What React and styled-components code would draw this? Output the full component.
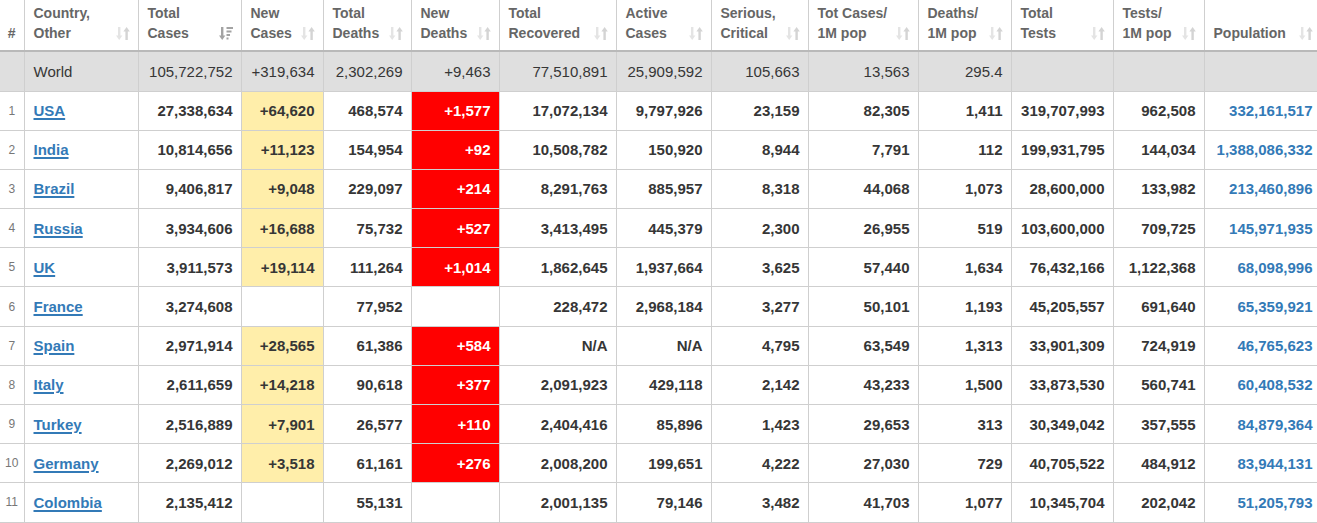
import React from 'react';
import styled, {createGlobalStyle} from 'styled-components';

const GlobalStyle = createGlobalStyle`
	html, body {
		margin: 0;
		padding: 0;
		overflow: hidden;
		background: #fff;
	}
	body {
		font-family: 'Liberation Sans', Arial, Helvetica, sans-serif;
	}
`;

const columns = [
	{key: 'rank', title: '#', width: 24, sort: false},
	{key: 'country', title: ['Country,', 'Other'], width: 114},
	{key: 'totalCases', title: ['Total', 'Cases'], width: 103, active: true},
	{key: 'newCases', title: ['New', 'Cases'], width: 82},
	{key: 'totalDeaths', title: ['Total', 'Deaths'], width: 88},
	{key: 'newDeaths', title: ['New', 'Deaths'], width: 88},
	{key: 'recovered', title: ['Total', 'Recovered'], width: 117},
	{key: 'active', title: ['Active', 'Cases'], width: 95},
	{key: 'serious', title: ['Serious,', 'Critical'], width: 97},
	{key: 'casesPerM', title: ['Tot Cases/', '1M pop'], width: 110},
	{key: 'deathsPerM', title: ['Deaths/', '1M pop'], width: 93},
	{key: 'tests', title: ['Total', 'Tests'], width: 102},
	{key: 'testsPerM', title: ['Tests/', '1M pop'], width: 91},
	{key: 'population', title: ['Population'], width: 117},
];

const world = ['', 'World', '105,722,752', '+319,634', '2,302,269', '+9,463', '77,510,891', '25,909,592', '105,663', '13,563', '295.4', '', '', ''];

const rows = [
	['1', 'USA', '27,338,634', '+64,620', '468,574', '+1,577', '17,072,134', '9,797,926', '23,159', '82,305', '1,411', '319,707,993', '962,508', '332,161,517'],
	['2', 'India', '10,814,656', '+11,123', '154,954', '+92', '10,508,782', '150,920', '8,944', '7,791', '112', '199,931,795', '144,034', '1,388,086,332'],
	['3', 'Brazil', '9,406,817', '+9,048', '229,097', '+214', '8,291,763', '885,957', '8,318', '44,068', '1,073', '28,600,000', '133,982', '213,460,896'],
	['4', 'Russia', '3,934,606', '+16,688', '75,732', '+527', '3,413,495', '445,379', '2,300', '26,955', '519', '103,600,000', '709,725', '145,971,935'],
	['5', 'UK', '3,911,573', '+19,114', '111,264', '+1,014', '1,862,645', '1,937,664', '3,625', '57,440', '1,634', '76,432,166', '1,122,368', '68,098,996'],
	['6', 'France', '3,274,608', '', '77,952', '', '228,472', '2,968,184', '3,277', '50,101', '1,193', '45,205,557', '691,640', '65,359,921'],
	['7', 'Spain', '2,971,914', '+28,565', '61,386', '+584', 'N/A', 'N/A', '4,795', '63,549', '1,313', '33,901,309', '724,919', '46,765,623'],
	['8', 'Italy', '2,611,659', '+14,218', '90,618', '+377', '2,091,923', '429,118', '2,142', '43,233', '1,500', '33,873,530', '560,741', '60,408,532'],
	['9', 'Turkey', '2,516,889', '+7,901', '26,577', '+110', '2,404,416', '85,896', '1,423', '29,653', '313', '30,349,042', '357,555', '84,879,364'],
	['10', 'Germany', '2,269,012', '+3,518', '61,161', '+276', '2,008,200', '199,651', '4,222', '27,030', '729', '40,705,522', '484,912', '83,944,131'],
	['11', 'Colombia', '2,135,412', '', '55,131', '', '2,001,135', '79,146', '3,482', '41,703', '1,077', '10,345,704', '202,042', '51,205,793'],
];

// sort glyphs drawn by hand (down arrow + up arrow, or down arrow + bars when active)
function SortIcon({active}) {
	if (active) {
		return (
			<IconSvg width='14' height='15' viewBox='0 0 14 15' fill='#a3a3a3'>
				<rect x='2' y='1' width='2.4' height='9' />
				<polygon points='0,9.5 6.4,9.5 3.2,14' />
				<rect x='7.5' y='1' width='6.5' height='2' />
				<rect x='7.5' y='4.5' width='5' height='2' />
				<rect x='7.5' y='8' width='3.5' height='2' />
				<rect x='7.5' y='11.5' width='2' height='2' />
			</IconSvg>
		);
	}
	return (
		<IconSvg width='14' height='15' viewBox='0 0 14 15'>
			<g fill='#e4e4e4'>
				<rect x='2' y='1' width='2.4' height='9' />
				<polygon points='0,9.5 6.4,9.5 3.2,14' />
			</g>
			<g fill='#d4d4d4'>
				<polygon points='7.4,5.5 13.8,5.5 10.6,1' />
				<rect x='9.4' y='5' width='2.4' height='9' />
			</g>
		</IconSvg>
	);
}

function cellVariant(index, value) {
	if (!value) return undefined;
	if (index === 3) return 'yellow';
	if (index === 5) return 'red';
	return undefined;
}

export default function App() {
	return (
		<>
			<GlobalStyle />
			<Table>
				<colgroup>
					{columns.map((c) => (
						<col key={c.key} style={{width: c.width}} />
					))}
				</colgroup>
				<thead>
					<tr>
						{columns.map((c) => (
							<HeadCell key={c.key} $rank={c.key === 'rank'}>
								{c.key === 'rank' ? (
									'#'
								) : (
									<HeadInner>
										<HeadTitle>
											{c.title.map((line) => (
												<span key={line}>{line}</span>
											))}
										</HeadTitle>
										{c.sort !== false && <SortIcon active={c.active} />}
									</HeadInner>
								)}
							</HeadCell>
						))}
					</tr>
				</thead>
				<tbody>
					<WorldRow>
						{world.map((v, i) => (
							<Cell key={i} $align={i === 1 ? 'left' : 'right'}>
								{v}
							</Cell>
						))}
					</WorldRow>
					{rows.map((row) => (
						<Row key={row[0]}>
							{row.map((v, i) => {
								if (i === 0) return <RankCell key={i}>{v}</RankCell>;
								if (i === 1)
									return (
										<Cell key={i} $align='left'>
											<CountryLink href='#'>{v}</CountryLink>
										</Cell>
									);
								if (i === 13)
									return (
										<Cell key={i}>
											<PopLink href='#'>{v}</PopLink>
										</Cell>
									);
								return (
									<Cell key={i} $variant={cellVariant(i, v)}>
										{v}
									</Cell>
								);
							})}
						</Row>
					))}
				</tbody>
			</Table>
		</>
	);
}

const Table = styled.table`
	width: 1321px;
	table-layout: fixed;
	border-collapse: collapse;
	border-spacing: 0;
	font-family: 'Liberation Sans', Arial, Helvetica, sans-serif;
	color: #363636;
`;

const HeadCell = styled.th`
	height: 51px;
	padding: 0 8px 7px 9px;
	box-sizing: border-box;
	vertical-align: bottom;
	text-align: ${(p) => (p.$rank ? 'center' : 'left')};
	font-size: 14px;
	font-weight: bold;
	line-height: 20px;
	color: #666;
	background: #fff;
	border-left: 1px solid #cfcfcf;
	border-bottom: 2px solid #b9b9b9;
	${(p) => p.$rank && 'border-left: none; padding: 0 0 7px 0;'}
`;

const HeadInner = styled.div`
	display: flex;
	align-items: flex-end;
	justify-content: space-between;
`;

const HeadTitle = styled.div`
	display: flex;
	flex-direction: column;
	white-space: nowrap;
`;

const IconSvg = styled.svg`
	flex-shrink: 0;
	margin-bottom: 2px;
	display: block;
`;

const Row = styled.tr`
	height: 39.2px;
`;

const WorldRow = styled.tr`
	height: 40px;
	background: #dfdfdf;

	td {
		font-weight: normal;
	}
`;

const Cell = styled.td`
	padding: 0 8px 0 9px;
	border: 1px solid #cfcfcf;
	border-top: none;
	text-align: ${(p) => p.$align || 'right'};
	vertical-align: middle;
	font-size: 15px;
	font-weight: bold;
	white-space: nowrap;
	overflow: hidden;
	background: ${(p) =>
		p.$variant === 'yellow' ? '#ffeeaa' : p.$variant === 'red' ? '#ff0000' : 'transparent'};
	color: ${(p) => (p.$variant === 'red' ? '#fff' : 'inherit')};

	&:first-child {
		border-left: none;
	}
`;

const RankCell = styled.td`
	padding: 0;
	border-bottom: 1px solid #cfcfcf;
	text-align: center;
	vertical-align: middle;
	font-size: 12px;
	color: #777;
`;

const CountryLink = styled.a`
	color: #337ab7;
	font-weight: bold;
	text-decoration: underline;
	text-decoration-thickness: 2px;
	text-underline-offset: 2px;
`;

const PopLink = styled.a`
	color: #337ab7;
	font-weight: bold;
	text-decoration: none;
`;
